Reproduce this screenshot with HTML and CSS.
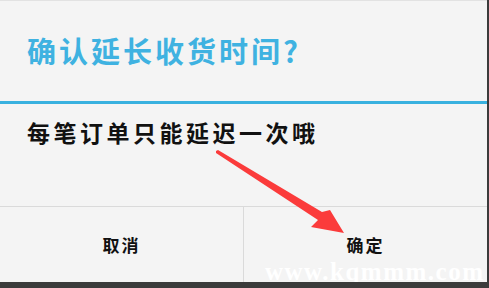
FILE: index.html
```html
<!DOCTYPE html>
<html lang="zh-CN">
<head>
<meta charset="utf-8">
<link rel="stylesheet" href="styles.css">
</head>
<body>
<div class="dialog">
  <div class="title">确认延长收货时间?</div>
  <div class="rule"></div>
  <div class="message">每笔订单只能延迟一次哦</div>
  <div class="buttons">
    <div class="btn">取消</div>
    <div class="btn btn-ok">确定</div>
  </div>
  <svg class="arrow" width="489" height="288" viewBox="0 0 489 288">
    <polygon points="216,151 218,150 322,212 330,210 344,233 311,227 318,220 216,153" fill="#fb3b3b"/>
  </svg>
  <div class="watermark">www.kqmmm.com</div>
</div>
</body>
</html>
```
FILE: styles.css
```css
html, body {
  margin: 0;
  padding: 0;
}
body {
  background: #3b3b3b;
  width: 489px;
  height: 288px;
  overflow: hidden;
  font-family: "Noto Sans CJK SC", "Noto Sans", sans-serif;
}
.dialog {
  position: relative;
  width: 487px;
  height: 282px;
  background: #f4f4f4;
  border-top: 1px solid #e2e2e2;
  box-sizing: border-box;
  display: flex;
  flex-direction: column;
  overflow: hidden;
}
.title {
  height: 100px;
  box-sizing: border-box;
  padding: 29px 0 0 27px;
  font-size: 29px;
  line-height: 40px;
  letter-spacing: 3px;
  font-weight: 700;
  color: #3fb2e1;
}
.rule {
  height: 3px;
  background: #39b1df;
}
.message {
  height: 102px;
  box-sizing: border-box;
  padding: 11px 0 0 27px;
  font-size: 23px;
  line-height: 34px;
  letter-spacing: 3.5px;
  font-weight: 700;
  color: #111;
}
.buttons {
  flex: 1;
  display: flex;
  border-top: 1px solid #dadada;
}
.btn {
  flex: 1;
  display: flex;
  align-items: center;
  justify-content: center;
  font-size: 17px;
  line-height: 20px;
  font-weight: 700;
  letter-spacing: 2px;
  color: #111;
}
.btn-ok {
  border-left: 1px solid #dadada;
}
.arrow {
  position: absolute;
  left: 0;
  top: -1px;
  pointer-events: none;
}
.watermark {
  position: absolute;
  left: 265px;
  top: 261px;
  font-family: "Liberation Serif", serif;
  font-weight: 700;
  font-size: 25px;
  letter-spacing: 1.5px;
  line-height: 20px;
  color: #ffffff;
}
```
